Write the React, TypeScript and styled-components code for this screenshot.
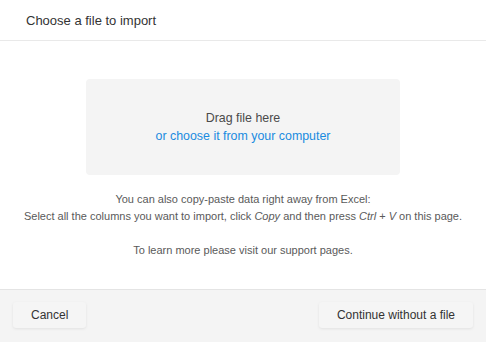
import React from "react";
import styled, { createGlobalStyle } from "styled-components";

const GlobalStyle = createGlobalStyle`
  html, body {
    margin: 0;
    padding: 0;
    background: #ffffff;
  }
  body {
    font-family: "Liberation Sans", Arial, sans-serif;
  }
`;

const Dialog = styled.div`
  width: 486px;
  height: 342px;
  display: flex;
  flex-direction: column;
  background: #ffffff;
  box-sizing: border-box;
`;

const Header = styled.div`
  height: 41px;
  box-sizing: border-box;
  display: flex;
  align-items: center;
  padding: 0 26px;
  border-bottom: 1px solid #e9e9e9;
`;

const Title = styled.h2`
  margin: 0;
  font-size: 13px;
  font-weight: normal;
  color: #333333;
`;

const Body = styled.div`
  flex: 1;
  display: flex;
  flex-direction: column;
  align-items: center;
  padding-top: 38px;
`;

const DropZone = styled.div`
  width: 314px;
  height: 96px;
  background: #f4f4f4;
  border-radius: 4px;
  display: flex;
  flex-direction: column;
  align-items: center;
  justify-content: center;
  font-size: 12.4px;
  line-height: 18px;
  color: #4a4a4a;
`;

const ChooseLink = styled.a`
  color: #1a8be0;
  text-decoration: none;
  cursor: pointer;
`;

const Hint = styled.p`
  margin: 0;
  margin-top: ${(p: { $top: number }) => p.$top}px;
  font-size: 11px;
  line-height: 17px;
  color: #5a5a5a;
  text-align: center;
`;

const Footer = styled.div`
  height: 53px;
  box-sizing: border-box;
  border-top: 1px solid #e4e4e4;
  background: #f4f4f4;
  display: flex;
  align-items: center;
  justify-content: space-between;
  padding: 0 13px 2px 13px;
`;

const Button = styled.button`
  height: 26px;
  padding: 0 18px;
  border: none;
  border-radius: 3px;
  background: #f5f5f5;
  box-shadow: 0 1px 3px rgba(0, 0, 0, 0.08);
  font-family: "Liberation Sans", Arial, sans-serif;
  font-size: 12px;
  color: #333333;
  cursor: pointer;
`;

export default function App() {
  return (
    <>
      <GlobalStyle />
      <Dialog>
        <Header>
          <Title>Choose a file to import</Title>
        </Header>
        <Body>
          <DropZone>
            <span>Drag file here</span>
            <ChooseLink>or choose it from your computer</ChooseLink>
          </DropZone>
          <Hint $top={16}>
            You can also copy-paste data right away from Excel:
            <br />
            Select all the columns you want to import, click <i>Copy</i> and then press{" "}
            <i>Ctrl</i> + <i>V</i> on this page.
          </Hint>
          <Hint $top={17}>To learn more please visit our support pages.</Hint>
        </Body>
        <Footer>
          <Button>Cancel</Button>
          <Button>Continue without a file</Button>
        </Footer>
      </Dialog>
    </>
  );
}
